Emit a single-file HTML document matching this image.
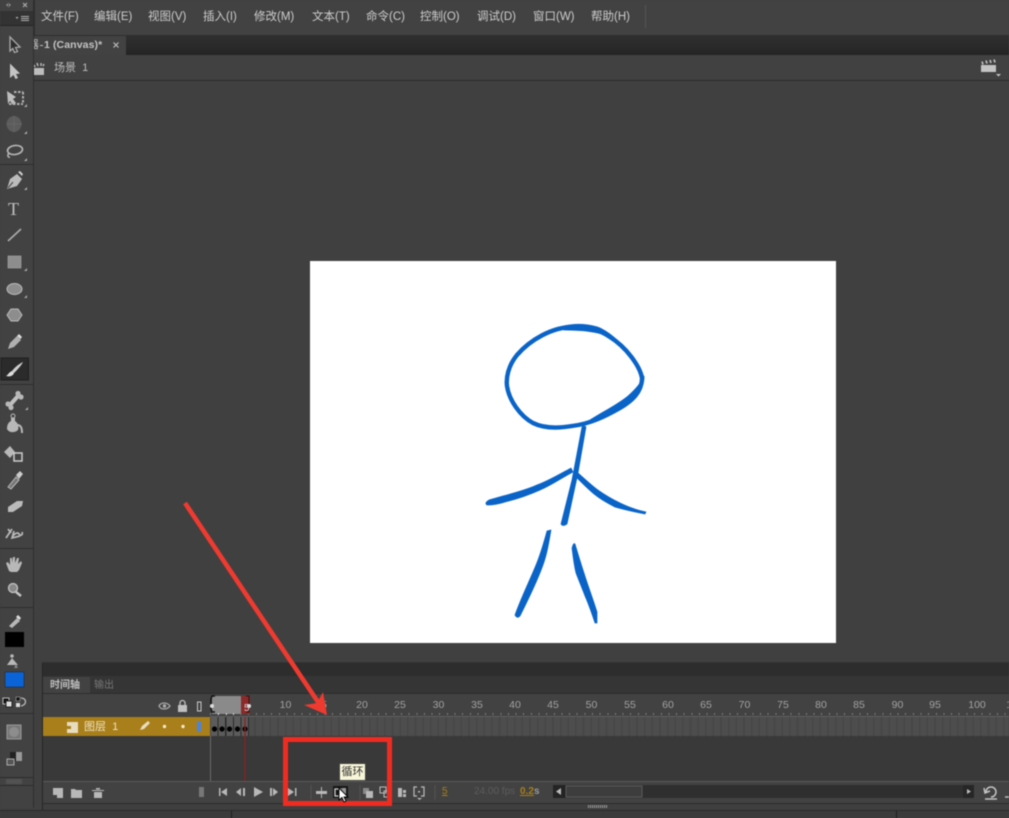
<!DOCTYPE html>
<html lang="zh"><head><meta charset="utf-8"><title>Animate</title>
<style>
html,body{margin:0;padding:0;background:#404040;}
#p{position:relative;width:1009px;height:818px;overflow:hidden;background:#404040;font-family:"Liberation Sans","Noto Sans CJK SC",sans-serif;color:#c4c4c4;filter:blur(.5px);}
.a{position:absolute;}
.m{position:absolute;top:9px;font-size:11.5px;line-height:16px;color:#cdcdcd;white-space:nowrap;}
.n{position:absolute;top:699px;width:30px;margin-left:-15px;text-align:center;font-size:10.5px;line-height:13px;color:#a2a2a2;}
</style></head><body><div id="p">

<!-- menu bar -->
<div class="a" style="left:0;top:0;width:1009px;height:35px;background:#424242"></div>
<div class="a" style="left:33px;top:35px;width:976px;height:1px;background:#2e2e2e"></div>
<span class="m" style="left:41px">文件(F)</span>
<span class="m" style="left:94px">编辑(E)</span>
<span class="m" style="left:148px">视图(V)</span>
<span class="m" style="left:203px">插入(I)</span>
<span class="m" style="left:254px">修改(M)</span>
<span class="m" style="left:312px">文本(T)</span>
<span class="m" style="left:366px">命令(C)</span>
<span class="m" style="left:420px">控制(O)</span>
<span class="m" style="left:477px">调试(D)</span>
<span class="m" style="left:533px">窗口(W)</span>
<span class="m" style="left:591px">帮助(H)</span>
<div class="a" style="left:645px;top:5px;width:1px;height:23px;background:#555"></div>

<!-- doc tab bar -->
<div class="a" style="left:33px;top:36px;width:976px;height:19px;background:linear-gradient(#2f2f2f,#282828 70%,#232323)"></div>
<div class="a" style="left:33px;top:36px;width:93px;height:19px;background:#424242"></div>
<span class="a" style="left:44px;top:38px;font-size:10.5px;line-height:14px;font-weight:bold;color:#c4c4c4;white-space:nowrap;letter-spacing:.1px">1 (Canvas)*</span>
<div class="a" style="left:33px;top:38px;width:7px;height:15px;overflow:hidden"><span class="a" style="left:-5px;top:0;font-size:11px;line-height:14px;color:#bbb">器</span></div>
<div class="a" style="left:40px;top:45px;width:3px;height:1px;background:#bbb"></div>
<svg class="a" style="left:112px;top:41px" width="9" height="9"><path d="M1.500 1.500L6.500 6.500M6.500 1.500L1.500 6.500" stroke="#bbb" stroke-width="1.200"/></svg>

<!-- scene bar -->
<div class="a" style="left:33px;top:55px;width:976px;height:25px;background:#414141"></div>
<div class="a" style="left:33px;top:80px;width:976px;height:1px;background:#2b2b2b"></div>
<span class="a" style="left:54px;top:61px;font-size:11px;line-height:15px;color:#bcbcbc;white-space:nowrap">场景&nbsp; 1</span>
<svg class="a" style="left:33px;top:60px" width="14" height="16"><path d="M1 8h10v7H1z" fill="#bdbdbd"/><path d="M1 5l1 2M4 3l1 3M8 3l0 3M11 4l-1 2" stroke="#bdbdbd" stroke-width="1.400"/></svg>
<svg class="a" style="left:978px;top:58px" width="26" height="20"><path d="M3 7h15v7H3z" fill="#c4c4c4"/><path d="M4 3.500l1 3M8 2.500l1 3M12 2l1 3M16 1.500l1 3" stroke="#c4c4c4" stroke-width="1.600"/><path d="M18 16h5l-2.500 2.500z" fill="#c4c4c4"/></svg>

<!-- stage -->
<div class="a" style="left:33px;top:81px;width:976px;height:582px;background:#404040"></div>
<div class="a" style="left:310px;top:261px;width:526px;height:382px;background:#fff"></div>
<svg class="a" style="left:0;top:0" width="1009" height="818">
 <path fill="none" stroke="#0a64c8" stroke-width="4.400" stroke-linejoin="round" d="M573 327C552 327 530 340 517 355C508 366 506 378 507 386C509 400 520 416 533 423C545 429 560 428 572 426C590 424 606 416 620 408C632 401 642 392 642 378C640 366 626 347 610 337C598 329 586 326 573 327Z"/>
 <g fill="#0a64c8" stroke="#0a64c8" stroke-width=".7" stroke-linejoin="round">
  <path d="M564 326C576 323 590 324 600 328C608 332 613 336 618 341C608 335 595 330 564 330Z"/>
  <path d="M644 376C645 390 632 402 614 412C604 417 592 422 584 424C598 414 616 406 628 396C636 389 641 383 644 376Z"/>
  <path d="M582 427Q584 425 586 427L578 473L567 524Q563 527 561 524L572 480Z"/>
  <path d="M571 468C560 474 548 481 537 485C526 490 514 493 503 496L489 500Q484 503 487 505Q496 505 505 502C517 499 529 495 540 490C552 485 563 477 573 472Z"/>
  <path d="M578 473C585 479 591 485 598 490C605 495 612 499 620 503C628 507 637 510 646 512L645 514C635 512 625 510 615 507C607 503 600 499 594 494C588 489 582 483 576 477Z"/>
  <path d="M551 530C549 542 547 554 543 565C537 582 528 600 520 616Q517 619 515 615C521 598 529 582 536 565C541 553 544 542 547 531Z"/>
  <path d="M573 545Q574 543 575 544C578 554 581 564 584 573C588 586 593 599 597 612L597 623L595 623C592 614 589 605 585 596C582 588 579 581 576 573C574 565 573 556 572 548Z"/>
 </g>
</svg>

<!-- left tools -->
<div class="a" style="left:0;top:0;width:33px;height:808px;background:#424242"></div>
<div class="a" style="left:33px;top:0;width:2px;height:36px;background:#2e2e2e"></div>
<div class="a" style="left:33px;top:36px;width:1px;height:772px;background:#2f2f2f"></div>
<div class="a" style="left:0;top:11px;width:33px;height:14px;background:#333"></div>
<div class="a" style="left:0;top:25px;width:33px;height:1px;background:#262626"></div>
<svg class="a" style="left:0;top:0" width="42" height="818">
 <g fill="#b0b0b0" stroke="none">
  <path d="M6 5L9 2.500V7.500zM11 5L8 2.500V7.500z" fill="#999"/>
  <path d="M23 3L27 7M27 3L23 7" stroke="#aaa" stroke-width="1.200"/>
  <path d="M15.500 17h3l-1.500 2z"/><rect x="21" y="16" width="8" height="1"/><rect x="21" y="18" width="8" height="1"/><rect x="21" y="20" width="8" height="1"/>
  <!-- arrow -->
  <path d="M10 37L20 47L15.500 47.500L17.500 51.500L14.500 52.500L12.800 48.500L10 51Z" fill="#2e2e2e" stroke="#aaa" stroke-width="1.300"/>
  <path d="M10 63.500L20 73.500L16 74L18 78L15.500 79L13.500 75L10 78Z" fill="#c4c4c4"/>
  <!-- free transform -->
  <path d="M7 91L16 97L13 99L16 103L13 105L10 101L8 104Z" fill="#bdbdbd"/>
  <path d="M14 92h9M23 92v12M9 104h14" stroke="#b0b0b0" stroke-width="2" stroke-dasharray="2.500 1.500" fill="none"/>
  <path d="M27 107h-3l3-3zM27 134h-3l3-3zM27 161h-3l3-3zM27 190h-3l3-3zM27 271h-3l3-3zM27 298h-3l3-3zM28 410h-3l3-3z" fill="#aaa"/>
  <!-- 3d -->
  <ellipse cx="14" cy="124" rx="7.500" ry="8" fill="#5c5c5c"/><path d="M7 124h15M14 116v16" stroke="#666"/>
  <!-- lasso -->
  <ellipse cx="15" cy="150" rx="7.500" ry="4.500" fill="none" stroke="#b4b4b4" stroke-width="1.700" transform="rotate(-8 15 150)"/>
  <path d="M9 153C7 155 8 158 10 157" fill="none" stroke="#b4b4b4" stroke-width="1.500"/>
  <rect x="0" y="164" width="33" height="1" fill="#2e2e2e"/>
  <!-- pen -->
  <path d="M7 189L10 179L17 174L22 179L17 186Z" fill="#bcbcbc"/><path d="M18 172l4 4 1-2-3-3z" fill="#ccc"/><path d="M8 188L13 182" stroke="#444"/>
  <!-- line -->
  <path d="M8 241L21 229" stroke="#aaa" stroke-width="1.700" fill="none"/>
  <rect x="8" y="256" width="13" height="12" fill="#8d8d8d" stroke="#aaa" stroke-width=".6"/>
  <ellipse cx="14.500" cy="289" rx="7.500" ry="5.500" fill="#8d8d8d" stroke="#bbb" stroke-width="1"/>
  <path d="M11 309h7l4 6-4 6h-7l-4-6z" fill="#8d8d8d" stroke="#bbb" stroke-width="1"/>
  <!-- pencil -->
  <path d="M8 349L10 343L17 336L21 340L14 347Z" fill="#b0b0b0"/><path d="M17 336l2-2 3 3-1.500 2z" fill="#ddd"/>
 </g>
 <rect x="1" y="358" width="27.500" height="22" fill="#2b2b2b" stroke="#1f1f1f"/>
 <g fill="#b8b8b8">
  <path d="M23 362C21 366 17 370 14 373L12 371C15 367 19 364 23 362Z" fill="#d0d0d0"/>
  <path d="M12 371L14 373C13 376 10 377 6 376C8 375 9 372 12 371Z" fill="#ddd"/>
  <rect x="0" y="384" width="33" height="1" fill="#2e2e2e"/>
  <!-- bone -->
  <path d="M10 405L18 396" stroke="#c0c0c0" stroke-width="4"/><circle cx="8" cy="404" r="2.600"/><circle cx="11" cy="407.500" r="2.600"/><circle cx="18" cy="393.500" r="2.600"/><circle cx="21" cy="397" r="2.600"/>
  <!-- ink bottle -->
  <path d="M7 429C7 424 9 422 11 421V418H15V421C18 423 19 426 18 430C15 433 9 433 7 429Z"/><circle cx="13" cy="416" r="2" fill="none" stroke="#b8b8b8"/><path d="M17 425C21 425 22 428 22 433" stroke="#b8b8b8" stroke-width="2" fill="none"/>
  <!-- bucket -->
  <path d="M10 446L15 452L10 458L4 452Z"/><rect x="14" y="453" width="8" height="8" fill="none" stroke="#ccc" stroke-width="1.500"/>
  <!-- eyedropper -->
  <path d="M8 487L16 477L19 480L11 489Z" fill="#777" stroke="#bbb"/><path d="M16 475L20 471L23 474L19 479Z" fill="#ccc"/>
  <!-- eraser -->
  <path d="M8 507L17 501H23L22 506L13 512H8Z" fill="#bbb"/>
  <!-- wand -->
  <path d="M6 538L12 529M12 537C15 533 18 532 19 534C21 537 23 534 22 532M14 531L12 538L20 536M8 529L11 533" fill="none" stroke="#b8b8b8" stroke-width="1.700"/>
  <rect x="0" y="548" width="33" height="1" fill="#2e2e2e"/>
  <!-- hand -->
  <path d="M9 571L6 563L8 562L10 565V558H12V563L13 557H15V563L17 558H19L18 564L21 561L22 563L19 570L17 572H11Z"/>
  <!-- zoom -->
  <circle cx="13" cy="588" r="4.500" fill="#888" stroke="#c4c4c4" stroke-width="1.300"/><path d="M16 592L21 596" stroke="#c4c4c4" stroke-width="2.500"/>
  <rect x="0" y="607" width="33" height="1" fill="#2e2e2e"/>
  <!-- stroke pencil -->
  <path d="M9 626L17 618L20 621L12 628Z"/><path d="M16 617l2-2 3 3-1.500 2z" fill="#ddd"/>
  <rect x="5" y="632" width="19" height="15" fill="#000"/>
  <!-- fill bucket -->
  <path d="M12 658L18 665H7Z"/><circle cx="12" cy="656" r="1.800"/><path d="M16 664L18 668H14Z" fill="#888"/>
  <rect x="5" y="672" width="19" height="15" fill="#0a64d8" stroke="#1f1f1f" stroke-width=".5"/>
  <!-- swap -->
  <rect x="3" y="698" width="6" height="6" fill="#111" stroke="#bbb"/><rect x="6" y="701" width="6" height="6" fill="#ddd" stroke="#222"/>
  <rect x="16" y="697" width="4" height="4" fill="#111" stroke="#aaa" stroke-width=".6"/><rect x="16" y="703" width="4" height="4" fill="#ddd"/>
  <path d="M21 698C27 698 27 705 21 706" stroke="#bbb" stroke-width="1.300" fill="none"/>
  <rect x="0" y="713" width="33" height="1" fill="#2e2e2e"/>
  <!-- snap, options -->
  <rect x="7" y="725" width="14" height="14" fill="#777" stroke="#9a9a9a"/><circle cx="14" cy="732" r="5" fill="#8d8d8d"/>
  <rect x="10" y="752" width="12" height="9" fill="#999"/><rect x="10" y="752" width="6" height="9" fill="#222"/>
  <rect x="7" y="759" width="7" height="6" fill="#555" stroke="#aaa"/>
  <rect x="0" y="777" width="33" height="1" fill="#2c2c2c"/><rect x="0" y="785" width="33" height="1" fill="#2c2c2c"/>
  <path d="M6 779h16v5H6z" fill="#6a6a6a"/><path d="M7 779v5M9 779v5M11 779v5M13 779v5M15 779v5M17 779v5M19 779v5M21 779v5" stroke="#2f2f2f" stroke-width=".8"/>
 </g>
</svg>
<span class="a" style="left:8px;top:199px;font-family:'Liberation Serif',serif;font-size:18px;line-height:20px;color:#c0c0c0">T</span>

<!-- timeline -->
<div class="a" style="left:42px;top:662px;width:967px;height:1px;background:#333"></div>
<div class="a" style="left:42px;top:663px;width:967px;height:13px;background:#2d2d2d"></div>
<div class="a" style="left:42px;top:676px;width:967px;height:17px;background:#353535"></div>
<div class="a" style="left:42px;top:663px;width:1px;height:147px;background:#262626"></div>
<div class="a" style="left:43px;top:677px;width:47px;height:17px;background:#424242"></div>
<span class="a" style="left:50px;top:679px;font-size:10px;line-height:13px;font-weight:bold;color:#c0c0c0">时间轴</span>
<span class="a" style="left:94px;top:679px;font-size:10px;line-height:13px;color:#777">输出</span>
<div class="a" style="left:43px;top:693px;width:966px;height:24px;background:#424242"></div>
<div class="a" style="left:43px;top:693px;width:966px;height:1px;background:#2d2d2d"></div>
<div class="a" style="left:210px;top:713px;width:799px;height:2px;background:repeating-linear-gradient(90deg,#7a7a7a 0 1px,transparent 1px 7.64px)"></div>
<div class="a" style="left:210px;top:716px;width:799px;height:1px;background:#5f5f5f"></div>
<span class="n" style="left:285.500px">10</span><span class="n" style="left:324px">5</span><span class="n" style="left:362px">20</span><span class="n" style="left:400px">25</span><span class="n" style="left:438.500px">30</span><span class="n" style="left:477px">35</span><span class="n" style="left:515px">40</span><span class="n" style="left:553px">45</span><span class="n" style="left:591.500px">50</span><span class="n" style="left:630px">55</span><span class="n" style="left:668px">60</span><span class="n" style="left:706px">65</span><span class="n" style="left:744.500px">70</span><span class="n" style="left:783px">75</span><span class="n" style="left:821px">80</span><span class="n" style="left:859px">85</span><span class="n" style="left:897.500px">90</span><span class="n" style="left:935px">95</span><span class="n" style="left:977px">100</span><span class="n" style="left:1015px">105</span>

<!-- layer row -->
<div class="a" style="left:43px;top:717px;width:167px;height:19px;background:#a87f1a"></div>
<div class="a" style="left:210px;top:717px;width:799px;height:19px;background:repeating-linear-gradient(90deg,#4d4d4d 0 6px,#464646 6px 7.64px)"></div>
<div class="a" style="left:43px;top:736px;width:966px;height:46px;background:#393939"></div>
<span class="a" style="left:84px;top:720px;font-size:11px;line-height:14px;color:#f0e2c0;white-space:nowrap">图层&nbsp; 1</span>

<!-- keyframes -->
<div class="a" style="left:211px;top:717px;width:38px;height:19px;background:repeating-linear-gradient(90deg,#5c5c5c 0 6.600px,#2a2a2a 6.600px 7.640px)"></div>
<svg class="a" style="left:0;top:0" width="1009" height="818">
 <!-- eye, lock, outline -->
 <path d="M159 706C161 702 167 702 170 706C167 710 161 710 159 706Z" fill="none" stroke="#aaa" stroke-width="1.300"/><circle cx="164.500" cy="706" r="1.700" fill="#aaa"/>
 <rect x="178" y="705" width="9" height="7" fill="#c0c0c0"/><path d="M180 705v-2a2.500 2.500 0 0 1 5 0v2" fill="none" stroke="#c0c0c0" stroke-width="1.300"/>
 <rect x="197.500" y="702" width="3.500" height="9" fill="none" stroke="#ccc" stroke-width="1"/>
 <!-- layer row icons -->
 <path d="M67 722h11v11h-11v-4h4v-3h-4z" fill="#e8dcc0"/>
 <path d="M140 730l2-4 6-5 2 2-6 6z" fill="#e8dcc0"/>
 <circle cx="164.500" cy="726.500" r="1.700" fill="#f5e9c5"/><circle cx="183" cy="726.500" r="1.700" fill="#f5e9c5"/>
 <rect x="197" y="721" width="4" height="11" rx="2" fill="#4a84e0"/>
 <!-- playhead span -->
 <rect x="212" y="696" width="30" height="18" fill="#8a8a8a"/>
 <rect x="241" y="696" width="9" height="18" fill="#8c2a2a"/>
 <path d="M215 696h-3l-1 3v10l1 3h3" fill="none" stroke="#111" stroke-width="1.400"/>
 <path d="M246 696h3v16h-3" fill="none" stroke="#301010" stroke-width="1"/>
 <circle cx="212" cy="706" r="2" fill="#ddd"/><circle cx="249" cy="706" r="2" fill="#ddd"/>
 <text x="244" y="711" font-family="Liberation Sans" font-size="10" fill="#ccc">5</text>
 <path d="M218 714h1M226 714h1M233 714h1" stroke="#eee" stroke-width="1.500"/>
 <circle cx="214.500" cy="729" r="2.600" fill="#000"/><circle cx="222" cy="729" r="2.600" fill="#000"/><circle cx="229.500" cy="729" r="2.600" fill="#000"/><circle cx="237.500" cy="729" r="2.600" fill="#000"/><circle cx="245" cy="729" r="2.600" fill="#000"/>
 <path d="M245 717V782" stroke="#8c2020" stroke-width="1.300"/>
 <path d="M210.500 736V803" stroke="#6a6a6a" stroke-width="1"/>
</svg>

<!-- controls -->
<div class="a" style="left:43px;top:781px;width:966px;height:1px;background:#5a5a5a"></div>
<div class="a" style="left:43px;top:782px;width:966px;height:21px;background:#424242"></div>
<div class="a" style="left:43px;top:803px;width:966px;height:1px;background:#2c2c2c"></div>
<div class="a" style="left:43px;top:804px;width:966px;height:6px;background:#3f3f3f"></div>
<div class="a" style="left:0;top:810px;width:1009px;height:1px;background:#2a2a2a"></div>
<div class="a" style="left:0;top:811px;width:1009px;height:7px;background:#3b3b3b"></div>
<div class="a" style="left:231px;top:811px;width:1px;height:7px;background:#1e1e1e"></div>
<div class="a" style="left:896px;top:811px;width:1px;height:7px;background:#1e1e1e"></div>
<div class="a" style="left:588px;top:805px;width:20px;height:3px;background:repeating-linear-gradient(90deg,#999 0 1px,#444 1px 2px)"></div>

<svg class="a" style="left:0;top:0" width="1009" height="818">
 <g fill="#b8b8b8">
  <path d="M53 788h10v10h-6v-3h-4z"/>
  <path d="M71 789h4l1 1h6v8H71z"/>
  <path d="M92 790h12v1H92zM94 792h8v6h-8z"/><path d="M96 788h4v1.500h-4z"/>
  <rect x="199" y="787" width="5" height="10" fill="#777"/>
  <path d="M219 788v8h1.500v-8zM221 792l6-4v8z"/>
  <path d="M236 792l5-4v8zM243 788h2v8h-2z"/>
  <path d="M254 787l9 5-9 5z"/>
  <path d="M270 788h2v8h-2zM273 788l5 4-5 4z"/>
  <path d="M288 788l6 4-6 4zM295 788h1.500v8H295z"/>
  <path d="M316 791h5v-4h1v4h5v3h-5v4h-1v-4h-5z"/>
  <rect x="333" y="786" width="15" height="12" fill="#161616"/>
  <rect x="335" y="789" width="6" height="7" fill="none" stroke="#ccc" stroke-width="1.300"/><path d="M342 788h4v8h-4z" fill="#999"/>
  <path d="M363 788h6v6h-6z" fill="#888"/><path d="M366 791h7v7h-7z"/>
  <path d="M380 787h6v6h-6z" fill="none" stroke="#bbb"/><path d="M384 791h5v6h-5z" fill="none" stroke="#bbb"/>
  <path d="M398 788h4v9h-4zM403 790h3v3h-3zM403 794h3v3h-3z"/>
  <path d="M417 787h-3v9h3M421 787h3v9h-3" fill="none" stroke="#bbb" stroke-width="1.200"/><path d="M417 798h5l-2.500 2z"/><rect x="418" y="791" width="2" height="1.500"/>
 </g>
 <path d="M311 785V800M435 785V800M360 785V800" stroke="#555"/>
 <rect x="553" y="785" width="420" height="13" fill="#2f2f2f"/>
 <rect x="553" y="785" width="13" height="13" fill="#242424"/><path d="M556 791.500l5-3.500v7z" fill="#bbb"/>
 <rect x="566" y="786" width="76" height="11" fill="#3d3d3d" stroke="#5a5a5a"/>
 <rect x="963" y="785" width="11" height="13" fill="#262626"/><path d="M967 789l4 2.500-4 2.500z" fill="#bbb"/>
 <path d="M986 792a5 5 0 1 1 5 5M984 788l1 5 5-2M985 799h12" fill="none" stroke="#c4c4c4" stroke-width="1.500"/>
 <path d="M1005 797h4" stroke="#bbb" stroke-width="1.500"/>
</svg>
<span class="a" style="left:442px;top:785px;font-size:10px;line-height:13px;color:#a87f1a;text-decoration:underline">5</span>
<span class="a" style="left:474px;top:785px;font-size:10px;line-height:13px;color:#5c5c5c;white-space:nowrap">24.00 fps</span>
<span class="a" style="left:520px;top:785px;font-size:10px;line-height:13px;font-weight:bold;color:#a87f1a;text-decoration:underline;white-space:nowrap">0.2</span>
<span class="a" style="left:534px;top:785px;font-size:10px;line-height:13px;font-weight:bold;color:#999">s</span>

<!-- red box, tooltip, arrow, cursor -->
<div class="a" style="left:283px;top:737px;width:99px;height:59px;border:5px solid #ef2c22"></div>
<div class="a" style="left:339px;top:763px;width:27px;height:18px;background:#f8f6d8;border:1px solid #444;box-sizing:border-box;font-size:11px;line-height:16px;text-align:center;color:#333">循环</div>
<svg class="a" style="left:0;top:0" width="1009" height="818">
 <path d="M185 503L322 708" stroke="#ef3a30" stroke-width="4.600" fill="none"/>
 <path d="M327 715L304 705L317 703L323 692Z" fill="#ef3a30"/>
 <path d="M339 788V800L342 797.500L344 802L346 801L344 797H348Z" fill="#fff" stroke="#000" stroke-width=".9"/>
</svg>
</div></body></html>
